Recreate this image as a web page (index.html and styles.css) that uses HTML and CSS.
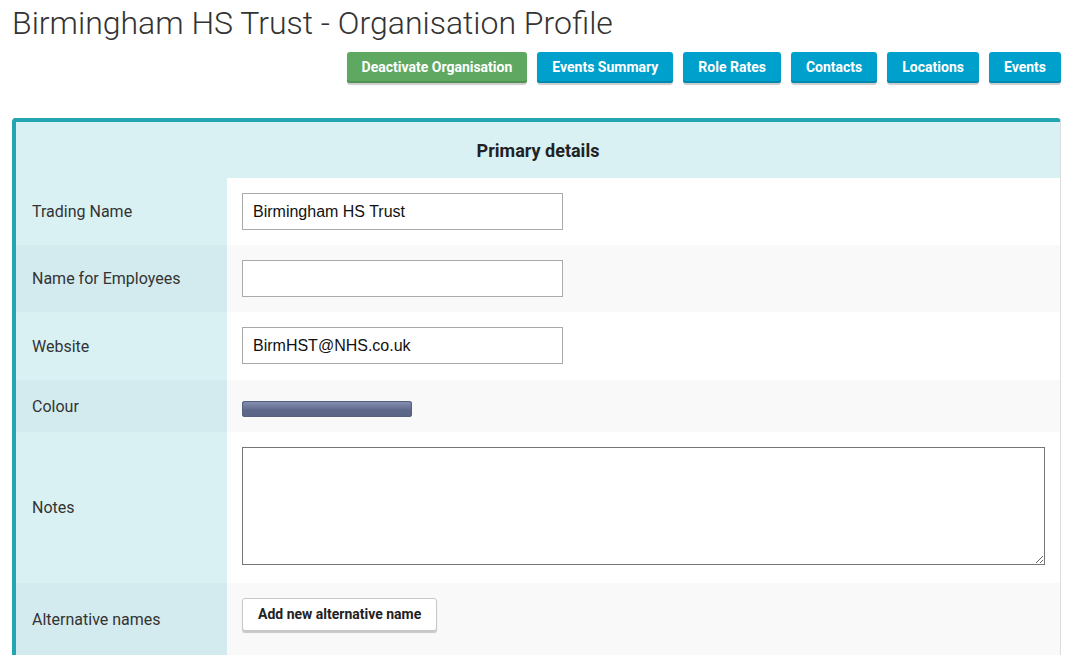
FILE: index.html
```html
<!DOCTYPE html>
<html lang="en">
<head>
<meta charset="utf-8">
<title>Organisation Profile</title>
<link rel="stylesheet" href="styles.css">
</head>
<body>
<div class="page">
  <h1 class="title">Birmingham HS Trust - Organisation Profile</h1>
  <div class="actions">
    <button class="btn btn-green">Deactivate Organisation</button>
    <button class="btn btn-blue">Events Summary</button>
    <button class="btn btn-blue">Role Rates</button>
    <button class="btn btn-blue">Contacts</button>
    <button class="btn btn-blue">Locations</button>
    <button class="btn btn-blue">Events</button>
  </div>
  <div class="panel">
    <div class="panel-head">Primary details</div>
    <div class="row">
      <div class="label">Trading Name</div>
      <div class="value"><input class="field" type="text" value="Birmingham HS Trust"></div>
    </div>
    <div class="row alt">
      <div class="label">Name for Employees</div>
      <div class="value"><input class="field" type="text" value=""></div>
    </div>
    <div class="row">
      <div class="label">Website</div>
      <div class="value value-web"><input class="field" type="text" value="BirmHST@NHS.co.uk"></div>
    </div>
    <div class="row alt">
      <div class="label">Colour</div>
      <div class="value value-colour"><div class="swatch"></div></div>
    </div>
    <div class="row">
      <div class="label">Notes</div>
      <div class="value value-notes"><textarea class="notes"></textarea></div>
    </div>
    <div class="row alt">
      <div class="label">Alternative names</div>
      <div class="value value-alt"><button class="btn-white">Add new alternative name</button></div>
    </div>
  </div>
</div>
</body>
</html>
```

FILE: styles.css
```css
html, body {
  margin: 0;
  padding: 0;
  background: #fff;
}
body {
  font-family: Roboto, "Liberation Sans", Arial, sans-serif;
  color: #333;
}
.page {
  padding: 0 19px 0 12px;
}
.title {
  margin: 0;
  padding-top: 3px;
  font-weight: 300;
  font-size: 32px;
  line-height: 40px;
  color: #333;
}
.actions {
  display: flex;
  justify-content: flex-end;
  gap: 10px;
  margin-top: 9px;
}
.btn {
  font-family: Roboto, "Liberation Sans", Arial, sans-serif;
  font-weight: 700;
  font-size: 14px;
  color: #fff;
  border: none;
  border-radius: 3px;
  height: 31px;
  padding: 0 15px 1px;
  cursor: pointer;
}
.btn-green {
  background: #5ea862;
  box-shadow: inset 0 -2px 0 #4f9253, 0 2px 1px rgba(0,0,0,0.2);
}
.btn-blue {
  background: #00a0cc;
  box-shadow: inset 0 -2px 0 #0089b0, 0 2px 1px rgba(0,0,0,0.2);
}
.panel {
  margin-top: 35px;
  border-top: 4px solid #24a6b2;
  border-left: 4px solid #24a6b2;
  border-right: 1px solid #dcdcdc;
  border-radius: 4px 4px 0 0;
}
.panel-head {
  background: #d9f1f3;
  text-align: center;
  font-weight: 700;
  font-size: 18px;
  color: #222;
  height: 56px;
  line-height: 58px;
}
.row {
  display: flex;
  background: #fff;
}
.label {
  width: 195px;
  flex: none;
  background: #d9f1f3;
  padding-left: 16px;
  display: flex;
  align-items: center;
  font-size: 16px;
  color: #333;
}
.row.alt {
  background: #f9f9f9;
}
.row.alt .label {
  background: #d3ebee;
}
.value {
  flex: 1;
  padding: 15px 15px;
}
.value-web {
  padding-bottom: 16px;
}
.field {
  display: block;
  box-sizing: border-box;
  width: 321px;
  height: 37px;
  border: 1px solid #aaa;
  padding: 0 10px;
  font-family: "Liberation Sans", Arial, sans-serif;
  font-size: 16px;
  color: #111;
  background: #fff;
}
.value-colour {
  padding: 21px 15px 15px;
}
.swatch {
  width: 170px;
  height: 16px;
  border-radius: 3px;
  background: linear-gradient(#8b94b4, #5c6689 60%, #5a6587);
  box-shadow: inset 0 0 0 1px #55607f;
}
.value-notes {
  padding: 15px 15px 18px;
}
.notes {
  display: block;
  box-sizing: border-box;
  width: 100%;
  height: 118px;
  border: 1px solid #767676;
  margin: 0;
  resize: vertical;
}
.value-alt {
  padding: 15px 15px 24px;
}
.btn-white {
  font-family: Roboto, "Liberation Sans", Arial, sans-serif;
  font-weight: 700;
  font-size: 14px;
  color: #222;
  background: #fff;
  border: 1px solid #c8c8c8;
  border-radius: 3px;
  height: 33px;
  padding: 0 15px 2px;
  box-shadow: 0 2px 1px rgba(0,0,0,0.2);
}
```
